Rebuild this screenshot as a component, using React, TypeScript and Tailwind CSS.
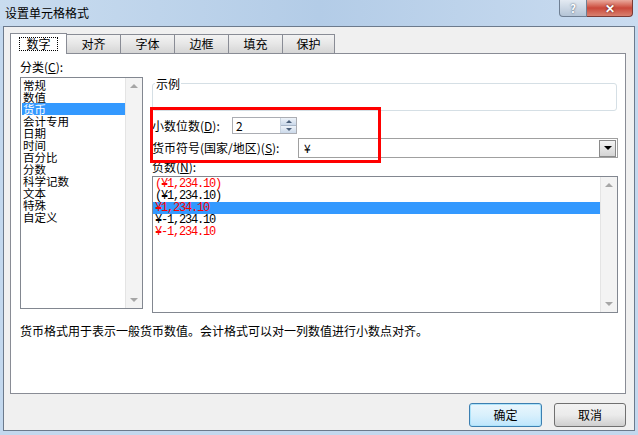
import React from 'react';

const CJK = "font-['Noto_Sans_CJK_SC','Noto_Sans',sans-serif]";
const MONO = "font-['Liberation_Mono','Noto_Sans_CJK_SC',monospace]";

const TABS = ['对齐', '字体', '边框', '填充', '保护'];
const CATEGORIES = ['常规', '数值', '货币', '会计专用', '日期', '时间', '百分比', '分数', '科学记数', '文本', '特殊', '自定义'];
const NEGATIVES: { text: string; red: boolean }[] = [
  { text: '(¥1,234.10)', red: true },
  { text: '(¥1,234.10)', red: false },
  { text: '¥1,234.10', red: true },
  { text: '¥-1,234.10', red: false },
  { text: '¥-1,234.10', red: true },
];

const ScrollBar: React.FC = () => (
  <div className="w-[17px] shrink-0 h-full bg-[#f3f3f3] border-l border-[#e4e4e4] flex flex-col items-center justify-between py-[6px]">
    <div className="w-0 h-0 border-l-[4px] border-r-[4px] border-b-[4px] border-l-transparent border-r-transparent border-b-[#a6a6a6]" />
    <div className="w-0 h-0 border-l-[4px] border-r-[4px] border-t-[4px] border-l-transparent border-r-transparent border-t-[#a6a6a6]" />
  </div>
);

const Key: React.FC<{ k: string }> = ({ k }) => (
  <span>(<span className="underline underline-offset-1">{k}</span>)</span>
);

export default function App() {
  return (
    <div className={`w-[638px] h-[435px] bg-[#c3d8ee] flex flex-col px-[3px] pb-[4px] relative overflow-hidden ${CJK} text-[12px] leading-[12px] text-black`}>
      {/* title bar */}
      <div className="h-[26px] -mx-[3px] shrink-0 flex items-center pl-[5px] bg-gradient-to-r from-[#c9dcef] via-[#b3cce7] to-[#cadcf0]">
        <span className="text-[12px] leading-[14px]">设置单元格格式</span>
      </div>
      <div className="absolute top-0 right-[5px] flex">
        <div className="w-[28px] h-[17px] rounded-bl-[4px] border border-t-0 border-[#6f7f93] bg-gradient-to-b from-[#e3eaf2] to-[#b4c4d6] flex items-center justify-center text-[11px] leading-[11px] font-bold text-white [text-shadow:0_0_2px_#34465a]">?</div>
        <div className="w-[46px] h-[17px] rounded-br-[4px] border border-l-0 border-t-0 border-[#7a3a35] bg-gradient-to-b from-[#e9a99d] via-[#c9473a] to-[#d8806f] flex items-center justify-center text-[12px] leading-[12px] font-bold text-white [text-shadow:0_0_2px_#4a1510]">✕</div>
      </div>

      {/* client */}
      <div className="flex-1 border border-[#6c7a8c] bg-[#f0f0f0] flex flex-col">
        {/* tabs */}
        <div className="flex items-end h-[26px] pl-[6px] pt-[5px] relative z-10">
          <div className="w-[57px] h-[21px] bg-white border border-b-0 border-[#898c95] flex items-center justify-center -mb-[1px]">
            <div className="border border-dotted border-black px-[6px] h-[14px] flex items-center">数字</div>
          </div>
          {TABS.map((t, i) => (
            <div
              key={t}
              className={`${i === TABS.length - 1 ? 'w-[52px]' : 'w-[54px]'} h-[19px] border border-l-0 border-b-0 border-[#898c95] bg-gradient-to-b from-[#f3f3f3] via-[#e6e6e6] to-[#d5d5d5] flex items-center justify-center`}
            >
              {t}
            </div>
          ))}
        </div>

        {/* panel */}
        <div className="ml-[6px] w-[616px] h-[341px] border border-[#898c95] bg-white flex flex-col">
          <div className="flex">
            {/* left column */}
            <div className="ml-[9px] w-[123px] flex flex-col">
              <div className="mt-[7px] h-[12px]">分类<Key k="C" />:</div>
              <div className="mt-[4px] h-[232px] border border-[#828790] flex">
                <div className="flex-1 pt-[1px] pl-[1px]">
                  {CATEGORIES.map((c) => (
                    <div
                      key={c}
                      className={`h-[12px] pl-[1px] text-[11.5px] leading-[12px] ${c === '货币' ? 'bg-[#3399ff] text-white' : ''}`}
                    >
                      {c}
                    </div>
                  ))}
                </div>
                <ScrollBar />
              </div>
            </div>

            {/* right column */}
            <div className="ml-[9px] w-[466px] flex flex-col relative">
              <div className="mt-[29px] w-[465px] h-[28px] border border-[#d5dfe5] rounded-[3px] relative">
                <span className="absolute -top-[7px] left-[2px] bg-white px-[1px] leading-[13px]">示例</span>
              </div>

              <div className="mt-[6px] flex items-center h-[17px]">
                <div className="w-[80px]">小数位数<Key k="D" />:</div>
                <div className="w-[65px] h-[17px] border border-[#abadb3] flex">
                  <div className="flex-1 pl-[3px] flex items-center">2</div>
                  <div className="w-[16px] flex flex-col border-l border-[#c9d4e0]">
                    <div className="flex-1 bg-gradient-to-b from-[#eef3f9] to-[#cbd9ea] border-b border-[#aab8ca] flex items-center justify-center">
                      <div className="w-0 h-0 border-l-[3px] border-r-[3px] border-b-[3px] border-l-transparent border-r-transparent border-b-[#4a5f7a]" />
                    </div>
                    <div className="flex-1 bg-gradient-to-b from-[#eef3f9] to-[#cbd9ea] flex items-center justify-center">
                      <div className="w-0 h-0 border-l-[3px] border-r-[3px] border-t-[3px] border-l-transparent border-r-transparent border-t-[#4a5f7a]" />
                    </div>
                  </div>
                </div>
              </div>

              <div className="mt-[4px] flex items-center h-[20px]">
                <div className="w-[146px]">货币符号(国家/地区)<Key k="S" />:</div>
                <div className="flex-1 h-[20px] border border-[#a0a0a0] flex items-center">
                  <div className="flex-1 pl-[5px]">¥</div>
                  <div className="w-[17px] h-[17px] mr-[1px] border border-[#8a8a8a] bg-gradient-to-b from-[#f4f4f4] to-[#d4d4d4] flex items-center justify-center">
                    <div className="w-0 h-0 border-l-[4px] border-r-[4px] border-t-[4px] border-l-transparent border-r-transparent border-t-black" />
                  </div>
                </div>
              </div>

              <div className="mt-[3px] h-[12px]">负数<Key k="N" />:</div>
              <div className="mt-[3px] h-[137px] border border-[#828790] flex">
                <div className="flex-1 pt-[1px]">
                  {NEGATIVES.map((n, i) => (
                    <div
                      key={i}
                      className={`h-[12px] pl-[2px] ${MONO} text-[12px] leading-[12px] tracking-[-1.2px] ${n.red ? 'text-[#ff0000]' : 'text-black'} ${i === 2 ? 'bg-[#3399ff]' : ''}`}
                    >
                      {n.text}
                    </div>
                  ))}
                </div>
                <ScrollBar />
              </div>

              {/* red highlight annotation */}
              <div className="absolute left-[-2px] top-[53px] w-[231px] h-[56px] border-[3px] border-[#ff0000]" />
            </div>
          </div>

          <div className="mt-[12px] ml-[9px] h-[12px]">货币格式用于表示一般货币数值。会计格式可以对一列数值进行小数点对齐。</div>
        </div>

        {/* footer */}
        <div className="flex justify-end gap-[12px] mt-[9px] pr-[8px]">
          <button className="w-[73px] h-[24px] rounded-[3px] border border-[#3c7fb1] bg-gradient-to-b from-[#eaf6fd] via-[#d9f0fc] to-[#bee6fd] shadow-[inset_0_0_0_1px_#aee3fa] flex items-center justify-center">确定</button>
          <button className="w-[72px] h-[24px] rounded-[3px] border border-[#707070] bg-gradient-to-b from-[#f2f2f2] via-[#ebebeb] to-[#cfcfcf] flex items-center justify-center">取消</button>
        </div>
      </div>
    </div>
  );
}
